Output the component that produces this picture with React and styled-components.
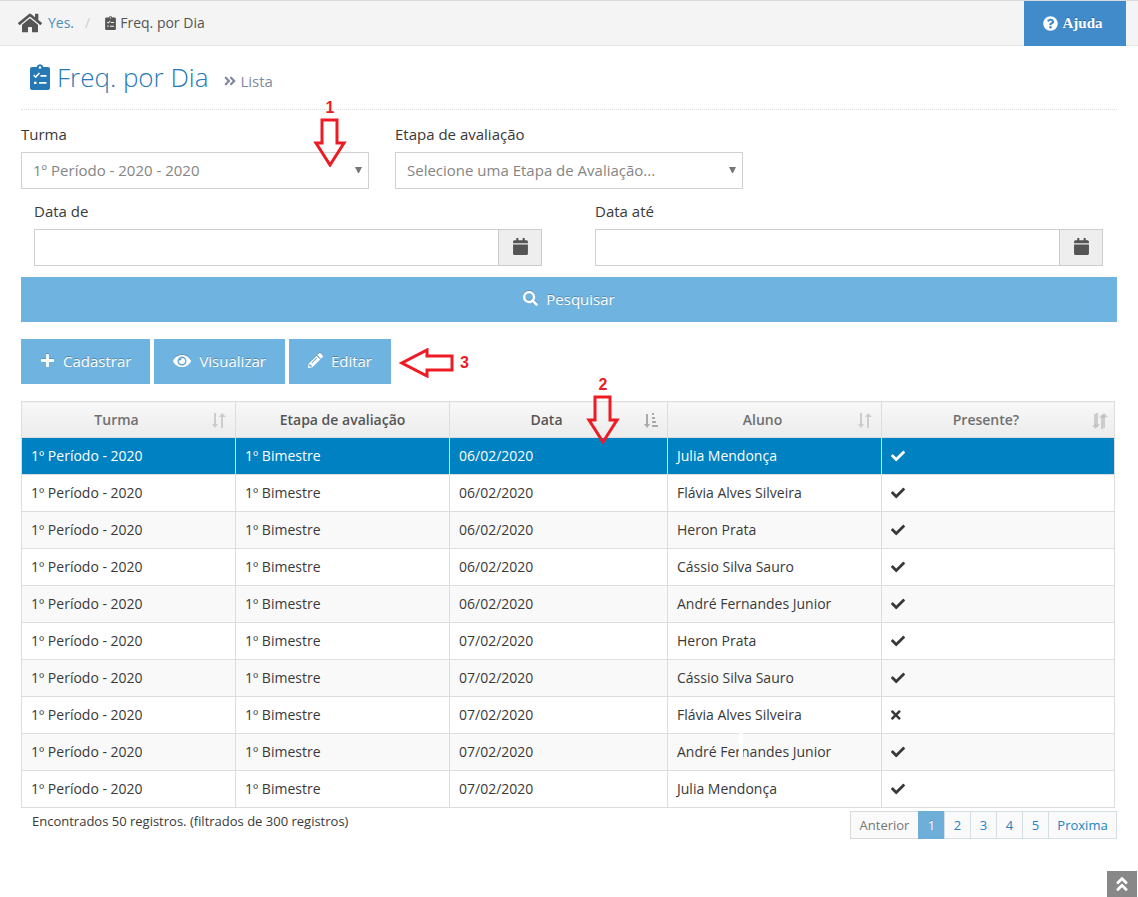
import React from "react";
import styled, { createGlobalStyle } from "styled-components";
import {
  FaHome, FaQuestionCircle, FaAngleDoubleRight, FaAngleDoubleUp, FaCalendar,
  FaSearch, FaPlus, FaEye, FaPencilAlt, FaCheck, FaTimes,
} from "react-icons/fa";

const GlobalStyle = createGlobalStyle`
  *, *::before, *::after { box-sizing: border-box; }
  body {
    margin: 0;
    background: #fff;
    color: #393939;
    font-family: "Open Sans", "Noto Sans", sans-serif;
    font-size: 14px;
    line-height: 20px;
  }
  button, input, select { font-family: inherit; border-radius: 0; margin: 0; }
  a { text-decoration: none; }
`;

const TopBar = styled.header`
  display: flex;
  justify-content: space-between;
  height: 46px;
  padding: 0 12px 0 18px;
  background: #f4f4f4;
  border-top: 1px solid #d9d9de;
  border-bottom: 1px solid #e5e5e5;
`;

const Crumbs = styled.nav`
  display: flex;
  align-items: center;
  gap: 6px;
  font-size: 14px;
  color: #555;
  a { color: #4c8fbd; }
`;

const Slash = styled.span`
  color: #ccc;
  margin: 0 9px 0 5px;
`;

const CrumbHere = styled.span`
  display: flex;
  align-items: center;
  gap: 4px;
`;

const HelpButton = styled.button`
  display: flex;
  align-items: center;
  justify-content: center;
  gap: 4px;
  width: 102px;
  height: 45px;
  padding: 0 4px 0 0;
  border: 0;
  background: #428bca;
  color: #fff;
  font: bold 15px "Liberation Serif", serif;
  text-shadow: 0 -1px 0 rgba(0, 0, 0, 0.25);
`;

const Page = styled.main`
  padding: 0 21px;
`;

const PageHeader = styled.div`
  display: flex;
  align-items: flex-start;
  height: 64px;
  padding: 11px 9px 0;
  border-bottom: 1px dotted #ddd;
`;

const Title = styled.h1`
  display: flex;
  align-items: center;
  gap: 7px;
  margin: 0 14px 0 0;
  font-size: 26px;
  line-height: 40px;
  font-weight: 300;
  color: #2679b5;
`;

const Subtitle = styled.span`
  display: flex;
  align-items: center;
  gap: 4px;
  padding-top: 14px;
  font-size: 15px;
  color: #8089a0;
`;

const FieldGrid = styled.div`
  display: grid;
  grid-template-columns: repeat(${(p) => p.$columns}, minmax(0, 1fr));
  column-gap: ${(p) => p.$gap}px;
  padding: ${(p) => p.$padding};
`;

const Field = styled.div`
  position: relative;
`;

const Label = styled.label`
  display: block;
  margin-bottom: 8px;
  font-size: 15px;
  line-height: 20px;
`;

const SelectWrap = styled.div`
  position: relative;
  svg {
    position: absolute;
    right: 7px;
    top: 15px;
    pointer-events: none;
  }
`;

const Select = styled.select`
  display: block;
  width: 100%;
  height: 37px;
  padding: 0 24px 2px 11px;
  border: 1px solid #d0d0d0;
  background: #fff;
  color: #858585;
  font-size: 15px;
  appearance: none;
`;

const DateGroup = styled.div`
  display: flex;
  height: 37px;
`;

const DateInput = styled.input`
  flex: 1;
  min-width: 0;
  padding: 0 11px;
  border: 1px solid #d0d0d0;
  border-right: 0;
  font-size: 15px;
`;

const DateButton = styled.button`
  display: flex;
  align-items: center;
  justify-content: center;
  width: 44px;
  padding: 0 0 2px;
  border: 1px solid #ccc;
  background: #eee;
  color: #555;
`;

const ActionButton = styled.button`
  display: flex;
  align-items: center;
  justify-content: center;
  gap: 8px;
  width: ${(p) => (p.$block ? "100%" : "auto")};
  height: 45px;
  padding: 0 19px 2px;
  border: 0;
  background: #6fb3e0;
  color: #fff;
  font-size: 15px;
  text-shadow: 0 -1px 0 rgba(0, 0, 0, 0.25);
  svg { filter: drop-shadow(0 -1px 0 rgba(0, 0, 0, 0.15)); }
`;

const Toolbar = styled.div`
  display: flex;
  align-items: center;
  gap: 4px;
  margin: 17px 0;
`;

const Marker = styled.span`
  display: flex;
  flex-direction: ${(p) => (p.$row ? "row" : "column")};
  align-items: center;
  gap: ${(p) => (p.$row ? 6 : 2)}px;
  padding: ${(p) => (p.$row ? "3px 0 0 4px" : "0")};
  color: #ed1c24;
  font: bold 16px/16px "Liberation Sans", sans-serif;
`;

const FloatingMarker = styled(Marker)`
  position: absolute;
  z-index: 1;
  top: ${(p) => p.$top}px;
  right: ${(p) => p.$right}px;
`;

const Table = styled.table`
  width: calc(100% - 2px);
  table-layout: fixed;
  border-collapse: collapse;
  font-size: 14px;
  th, td { border: 1px solid #ddd; }
`;

const HeadCell = styled.th`
  position: relative;
  height: 36px;
  padding: 0 24px 0 0;
  background: linear-gradient(#f8f8f8, #ececec);
  color: ${(p) => (p.$dark ? "#555" : "#707070")};
  font-weight: 600;
`;

const PlainHead = styled(HeadCell)`
  padding: 0;
`;

const SortMark = styled.span`
  position: absolute;
  right: ${(p) => p.$right ?? 9}px;
  top: 11px;
  display: flex;
`;

const Row = styled.tr`
  background: ${(p) => (p.$selected ? "#0081c2" : p.$striped ? "#f9f9f9" : "#fff")};
  color: ${(p) => (p.$selected ? "#fff" : "#393939")};
  font-weight: ${(p) => (p.$selected ? 500 : 400)};
`;

const Cell = styled.td`
  position: relative;
  height: 37px;
  padding: 0 9px;
  svg { display: block; }
`;

const Stroke = styled.span`
  position: absolute;
  left: 71px;
  top: -1px;
  width: 4px;
  height: 24px;
  background: #fff;
`;

const TableFooter = styled.footer`
  display: flex;
  justify-content: space-between;
  padding: 3px 0 0 11px;
  font-size: 13px;
`;

const Pages = styled.nav`
  display: flex;
`;

const PageLink = styled.a`
  width: ${(p) => (p.$wide ? 69 : 27)}px;
  height: 28px;
  margin-left: -1px;
  text-align: center;
  border: 1px solid ${(p) => (p.$active ? "#6faed9" : p.$disabled ? "#d9d9d9" : "#d4dfe3")};
  background: ${(p) => (p.$active ? "#6faed9" : "#fafafa")};
  color: ${(p) => (p.$active ? "#fff" : p.$disabled ? "#777" : "#2283c5")};
  line-height: 27px;
  text-shadow: ${(p) => (p.$active ? "0 -1px 0 rgba(0, 0, 0, 0.25)" : "none")};
`;

const ToTop = styled.button`
  position: fixed;
  right: 1px;
  bottom: 0;
  display: flex;
  align-items: center;
  justify-content: center;
  width: 30px;
  height: 26px;
  padding: 0;
  border: 0;
  background: #888;
  color: #fff;
`;

function ClipboardIcon({ width, height }) {
  return (
    <svg width={width} height={height} viewBox="0 0 20 26" aria-hidden="true">
      <path
        fill="currentColor"
        fillRule="evenodd"
        d="M2 3h4.6a3.5 3.5 0 0 1 6.8 0H18a2 2 0 0 1 2 2v19a2 2 0 0 1-2 2H2a2 2 0 0 1-2-2V5a2 2 0 0 1 2-2zM10 2.200a1.300 1.300 0 1 0 0 2.600 1.300 1.300 0 0 0 0-2.600zM3.200 11.600l2.400 2.600 4.400-4.600-1.100-1.100-3.300 3.400-1.300-1.400zM10.500 11h6v1.800h-6zM4 17.700h2.500v2.300H4zM9 18h7.500v1.800H9z"
      />
    </svg>
  );
}

function DownArrow() {
  return (
    <svg width="34" height="49" viewBox="0 0 34 49" aria-hidden="true">
      <path d="M9 2h15v23h7L17 47 3 25h6z" fill="none" stroke="#ed1c24" strokeWidth="3" />
    </svg>
  );
}

function LeftArrow() {
  return (
    <svg width="55" height="30" viewBox="0 0 55 30" aria-hidden="true">
      <path d="M53 8v14H28v6L3 15 28 2v6z" fill="none" stroke="#ed1c24" strokeWidth="3" />
    </svg>
  );
}

const SORT_PATH = "M2 0h2v11h2l-3 4-3-4h2zM9 15h2V4h3l-4-4-3 4h2z";

function SortBoth() {
  return (
    <svg width="14" height="15" viewBox="0 0 14 15" fill="#ccc" aria-hidden="true">
      <path d={SORT_PATH} />
    </svg>
  );
}

function SortAscending() {
  return (
    <svg width="14" height="15" viewBox="0 0 14 15" fill="#aaa" aria-hidden="true">
      <path d="M2 1h2v10h2l-3 4-3-4h2zM8 0h2v2H8zM8 4h3v2H8zM8 8h4v2H8zM8 12h6v2H8z" />
    </svg>
  );
}

function SortOverlaid() {
  return (
    <svg width="16" height="16" viewBox="0 0 16 16" fill="#b4b4b4" fillOpacity="0.6" aria-hidden="true">
      <path d={SORT_PATH} transform="translate(0 1)" />
      <path d={SORT_PATH} transform="translate(2 0)" />
    </svg>
  );
}

function Caret() {
  return (
    <svg width="7" height="6" viewBox="0 0 7 6" aria-hidden="true">
      <path d="M0 0h7L4 6H3z" fill="#777" />
    </svg>
  );
}

function SelectField({ id, label, option, children }) {
  return (
    <Field>
      <Label htmlFor={id}>{label}</Label>
      <SelectWrap>
        <Select id={id}><option>{option}</option></Select>
        <Caret />
      </SelectWrap>
      {children}
    </Field>
  );
}

function DateField({ id, label }) {
  return (
    <Field>
      <Label htmlFor={id}>{label}</Label>
      <DateGroup>
        <DateInput id={id} type="text" />
        <DateButton type="button" aria-label={label}><FaCalendar size={17} /></DateButton>
      </DateGroup>
    </Field>
  );
}

const rows = [
  ["06/02/2020", "Julia Mendonça", true],
  ["06/02/2020", "Flávia Alves Silveira", true],
  ["06/02/2020", "Heron Prata", true],
  ["06/02/2020", "Cássio Silva Sauro", true],
  ["06/02/2020", "André Fernandes Junior", true],
  ["07/02/2020", "Heron Prata", true],
  ["07/02/2020", "Cássio Silva Sauro", true],
  ["07/02/2020", "Flávia Alves Silveira", false],
  ["07/02/2020", "André Fernandes Junior", true],
  ["07/02/2020", "Julia Mendonça", true],
];

export default function App() {
  return (
    <>
      <GlobalStyle />
      <TopBar>
        <Crumbs>
          <FaHome size={24} />
          <a href="#inicio">Yes.</a>
          <Slash>/</Slash>
          <CrumbHere><ClipboardIcon width={11} height={14} />Freq. por Dia</CrumbHere>
        </Crumbs>
        <HelpButton type="button"><FaQuestionCircle size={15} />Ajuda</HelpButton>
      </TopBar>

      <Page>
        <PageHeader>
          <Title><ClipboardIcon width={20} height={26} />Freq. por Dia</Title>
          <Subtitle><FaAngleDoubleRight size={14} />Lista</Subtitle>
        </PageHeader>

        <FieldGrid $columns={3} $gap={26} $padding="14px 0 0">
          <SelectField id="turma" label="Turma" option="1º Período - 2020 - 2020">
            <FloatingMarker $top={-24} $right={22}>1<DownArrow /></FloatingMarker>
          </SelectField>
          <SelectField id="etapa" label="Etapa de avaliação" option="Selecione uma Etapa de Avaliação..." />
        </FieldGrid>

        <FieldGrid $columns={2} $gap={53} $padding="12px 14px 11px 13px">
          <DateField id="data-de" label="Data de" />
          <DateField id="data-ate" label="Data até" />
        </FieldGrid>

        <ActionButton type="button" $block><FaSearch size={15} />Pesquisar</ActionButton>

        <Toolbar>
          <ActionButton type="button"><FaPlus size={15} />Cadastrar</ActionButton>
          <ActionButton type="button"><FaEye size={18} />Visualizar</ActionButton>
          <ActionButton type="button"><FaPencilAlt size={15} />Editar</ActionButton>
          <Marker $row><LeftArrow />3</Marker>
        </Toolbar>

        <Table>
          <colgroup>
            <col width="214" />
            <col width="214" />
            <col width="218" />
            <col width="214" />
            <col width="233" />
          </colgroup>
          <thead>
            <tr>
              <HeadCell>Turma<SortMark><SortBoth /></SortMark></HeadCell>
              <PlainHead $dark>Etapa de avaliação</PlainHead>
              <HeadCell $dark>
                Data
                <SortMark><SortAscending /></SortMark>
                <FloatingMarker $top={-25} $right={47}>2<DownArrow /></FloatingMarker>
              </HeadCell>
              <HeadCell>Aluno<SortMark><SortBoth /></SortMark></HeadCell>
              <HeadCell>Presente?<SortMark $right={6}><SortOverlaid /></SortMark></HeadCell>
            </tr>
          </thead>
          <tbody>
            {rows.map(([date, student, present], i) => (
              <Row key={i} $selected={i === 0} $striped={i % 2 === 0}>
                <Cell>1º Período - 2020</Cell>
                <Cell>1º Bimestre</Cell>
                <Cell>{date}</Cell>
                <Cell>{student}{i === 8 && <Stroke />}</Cell>
                <Cell>
                  {present
                    ? <FaCheck size={14} aria-label="Sim" />
                    : <FaTimes size={14} preserveAspectRatio="xMinYMid meet" aria-label="Não" />}
                </Cell>
              </Row>
            ))}
          </tbody>
        </Table>

        <TableFooter>
          <span>Encontrados 50 registros. (filtrados de 300 registros)</span>
          <Pages>
            <PageLink href="#anterior" $wide $disabled>Anterior</PageLink>
            <PageLink href="#1" $active>1</PageLink>
            <PageLink href="#2">2</PageLink>
            <PageLink href="#3">3</PageLink>
            <PageLink href="#4">4</PageLink>
            <PageLink href="#5">5</PageLink>
            <PageLink href="#proxima" $wide>Proxima</PageLink>
          </Pages>
        </TableFooter>
      </Page>

      <ToTop type="button" aria-label="Topo"><FaAngleDoubleUp size={18} /></ToTop>
    </>
  );
}
